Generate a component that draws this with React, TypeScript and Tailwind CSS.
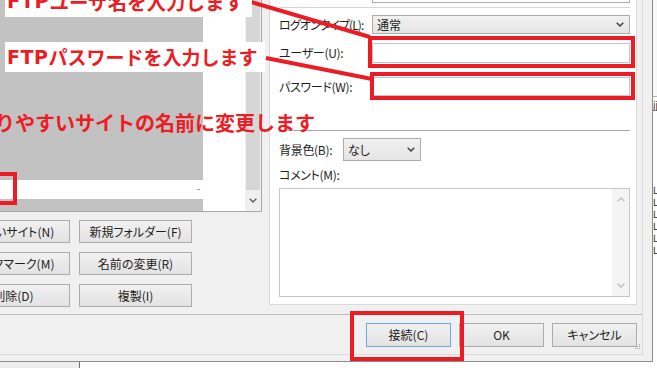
import type { ReactNode } from "react";

const ui = "font-['Noto_Sans_CJK_JP',sans-serif] [font-feature-settings:'palt'] text-[12px] text-[#1e1e1e]";
const red = "#ec1c24";

function Chevron({ up, className }: { up?: boolean; className?: string }) {
  return (
    <svg width="8" height="5" viewBox="0 0 8 5" className={className}>
      <path
        d={up ? "M0.7 4.3 L4 1 L7.3 4.3" : "M0.7 0.7 L4 4 L7.3 0.7"}
        fill="none"
        stroke="currentColor"
        strokeWidth="1.5"
      />
    </svg>
  );
}

function Btn({ children, primary, className }: { children: ReactNode; primary?: boolean; className?: string }) {
  return (
    <div
      className={`flex items-center justify-center whitespace-nowrap border bg-linear-to-b from-[#f1f1f1] to-[#e3e3e3] ${
        primary ? "border-[#6aa9e6]" : "border-[#acacac]"
      } ${className ?? ""}`}
    >
      {children}
    </div>
  );
}

function Select({ value, className }: { value: string; className?: string }) {
  return (
    <div
      className={`flex items-center justify-between border border-[#acacac] bg-linear-to-b from-[#f1f1f1] to-[#e5e5e5] pl-[4px] pr-[5px] ${className ?? ""}`}
    >
      <span>{value}</span>
      <Chevron className="text-[#444]" />
    </div>
  );
}

function Label({ children, className }: { children: ReactNode; className?: string }) {
  return <div className={`shrink-0 whitespace-nowrap ${className ?? "tracking-[-0.3px]"}`}>{children}</div>;
}

function SiteList() {
  return (
    <div className="flex h-[212px] border-r border-b border-[#a8a8a8] bg-white">
      <div className="flex flex-1">
        <div className="flex w-[246px] flex-col">
          <div className="h-[180px] bg-[#c2c2c2]" />
          <div className="flex h-[19px] items-center justify-end bg-white pr-[3px]">
            <span className="h-px w-[3px] bg-[#7aa7d8]" />
          </div>
          <div className="flex-1 bg-[#c2c2c2]" />
        </div>
        <div className="flex-1" />
      </div>
      <div className="flex w-[16px] flex-col bg-[#f0f0f0]">
        <div className="mx-[1px] h-[190px] bg-[#d6d6d6]" />
        <div className="flex flex-1 items-center justify-center text-[#606060]">
          <Chevron />
        </div>
      </div>
    </div>
  );
}

function SettingsPanel() {
  return (
    <div className="ml-[7px] flex h-[305px] w-[368px] flex-col border-x border-b border-[#d9d9d9] bg-white pl-[9px] pr-[6px]">
      <div className="ml-[93px] h-[3px] border-x border-b border-[#abadb3]" />
      <div className="mt-[4px] border-t border-[#d5d5d5]" />
      <div className="mt-[7px] flex h-[19px] items-center">
        <Label className="w-[93px] tracking-[-0.9px]">ログオンタイプ(L):</Label>
        <Select value="通常" className="h-full flex-1" />
      </div>
      <div className="mt-[9px] flex h-[20px] items-center">
        <Label className="w-[93px] tracking-[-0.3px]">ユーザー(U):</Label>
        <div className="h-full flex-1 border border-[#c5c7cc] bg-white" />
      </div>
      <div className="mt-[14px] flex h-[19px] items-center">
        <Label className="w-[93px] tracking-[-0.3px]">パスワード(W):</Label>
        <div className="h-full flex-1 border border-[#c5c7cc] bg-white" />
      </div>
      <div className="mt-[34px] border-t border-[#a9a9a9]" />
      <div className="mt-[7px] flex h-[23px] items-center">
        <Label className="w-[64px] tracking-[-0.3px]">背景色(B):</Label>
        <Select value="なし" className="h-full w-[78px]" />
      </div>
      <div className="mt-[6px] h-[16px] leading-[16px] tracking-[-0.3px]">コメント(M):</div>
      <div className="mt-[5px] flex h-[109px] border border-[#c5c7cc] bg-white">
        <div className="flex-1" />
        <div className="flex w-[17px] flex-col items-center justify-between bg-[#f4f4f4] py-[8px] text-[#c2c2c2]">
          <Chevron up />
          <Chevron />
        </div>
      </div>
    </div>
  );
}

function Annotations() {
  const note =
    "font-['Noto_Sans_CJK_JP',sans-serif] [font-feature-settings:normal] font-bold leading-[20px] whitespace-nowrap";
  const ftp = "font-['DejaVu_Sans',sans-serif] tracking-[0.5px]";
  return (
    <div className="pointer-events-none absolute inset-0">
      <svg width="657" height="368" className="absolute inset-0">
        <g fill="none" stroke={red} strokeWidth="4">
          <line x1="251" y1="2" x2="370" y2="37" />
          <line x1="266" y1="58" x2="372" y2="79" />
          <rect x="370" y="38" width="263" height="28" />
          <rect x="372" y="74" width="261" height="24" />
          <rect x="-8" y="174" width="23" height="29" />
          <rect x="352" y="313" width="110" height="46" />
        </g>
      </svg>
      <div className={`absolute left-[5px] top-[-13px] flex h-[30px] w-[247px] items-center bg-white pl-[2px] text-[19.5px] ${note}`} style={{ color: red }}>
        <span className={ftp}>FTP</span>ユーザ名を入力します
      </div>
      <div className={`absolute left-[5px] top-[42px] flex h-[30px] w-[260px] items-center bg-white pl-[2px] text-[19px] ${note}`} style={{ color: red }}>
        <span className={ftp}>FTP</span>パスワードを入力します
      </div>
      <div className={`absolute left-[-45px] top-[113px] text-[20px] ${note}`} style={{ color: red }}>
        分かりやすいサイトの名前に変更します
      </div>
    </div>
  );
}

export default function App() {
  return (
    <div className={`relative flex h-[368px] w-[657px] flex-col overflow-hidden bg-white ${ui}`}>
      <div className="flex h-[362px]">
        <div className="flex h-[362px] w-[653px] shrink-0 border-r border-b border-[#8c8c8c] bg-[#f0f0f0]">
          <div className="relative flex h-[355px] w-[643px] flex-col border-r border-b border-[#dadada]">
            <div className="flex h-[314px]">
              <div className="-ml-[43px] flex w-[305px] shrink-0 flex-col">
                <SiteList />
                <div className="mt-[8px] grid grid-cols-[113px_113px] gap-x-[9px] gap-y-[9px]">
                  <Btn className="h-[23px]">新しいサイト(N)</Btn>
                  <Btn className="h-[23px]">新規フォルダー(F)</Btn>
                  <Btn className="h-[23px]">ブックマーク(M)</Btn>
                  <Btn className="h-[23px]">名前の変更(R)</Btn>
                  <Btn className="h-[23px]">削除(D)</Btn>
                  <Btn className="h-[23px]">複製(I)</Btn>
                </div>
              </div>
              <SettingsPanel />
            </div>
            <div className="border-t border-[#bcbcbc]" />
            <div className="flex justify-end gap-[8px] pt-[8px] pr-[5px]">
              <Btn primary className="h-[24px] w-[85px]">接続(C)</Btn>
              <Btn className="h-[24px] w-[85px]">OK</Btn>
              <Btn className="h-[24px] w-[85px]">キャンセル</Btn>
            </div>
            <svg width="6" height="6" viewBox="0 0 6 6" className="absolute right-[1px] bottom-[4px] text-[#a0a0a0]">
              <g fill="currentColor">
                <rect x="4" y="0" width="1" height="1" />
                <rect x="2" y="2" width="1" height="1" />
                <rect x="4" y="2" width="1" height="1" />
                <rect x="0" y="4" width="1" height="1" />
                <rect x="2" y="4" width="1" height="1" />
                <rect x="4" y="4" width="1" height="1" />
              </g>
            </svg>
          </div>
        </div>
        <div className="flex flex-1 flex-col overflow-hidden text-[9px] leading-[12px] text-[#222]">
          <div className="h-[97px] border-b border-[#b0b0b0] bg-[#f7f7f7]" />
          <div className="h-[12px] pt-[2px]">jj</div>
          <div className="mt-[76px] flex flex-col">
            <span className="h-[12px]">L</span>
            <span className="h-[12px]">L</span>
            <span className="h-[12px]">L</span>
            <span className="h-[12px]">L</span>
            <span className="h-[12px]">L</span>
            <span className="h-[12px]">L</span>
          </div>
        </div>
      </div>
      <div className="flex h-[6px]">
        <div className="w-[80px] border-r border-[#6d6d6d] bg-[#ededed]" />
        <div className="flex-1 bg-white" />
      </div>
      <Annotations />
    </div>
  );
}
